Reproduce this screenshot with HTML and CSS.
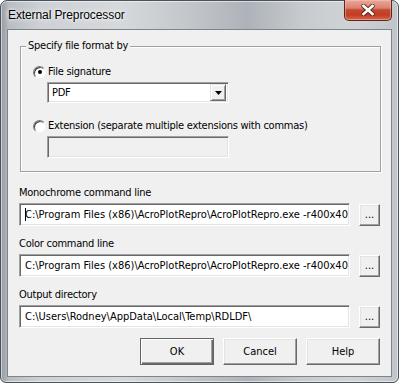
FILE: index.html
```html
<!DOCTYPE html>
<html>
<head>
	<title>External Preprocessor</title>
	<link rel="stylesheet" href="styles.css">
</head>
<body>
<div class="window">
	<div class="titlebar">
		<span class="title">External Preprocessor</span>
		<button class="close">
			<svg width="14" height="12" viewBox="0 0 14 12">
				<path d="M2.5 2 L11.5 10 M11.5 2 L2.5 10" stroke="#4a1c14" stroke-width="4.6" stroke-linecap="round" opacity="0.75"/>
				<path d="M2.5 2 L11.5 10 M11.5 2 L2.5 10" stroke="#fff" stroke-width="2.6" stroke-linecap="square"/>
			</svg>
		</button>
	</div>
	<div class="client">
		<fieldset class="group">
			<legend>Specify file format by</legend>
			<label class="radio first"><span class="dot checked"></span>File signature</label>
			<div class="combo">
				<span class="combo-text">PDF</span>
				<span class="drop">
					<svg width="7" height="4" viewBox="0 0 7 4"><path d="M0 0 H7 L3.5 4 Z" fill="#000"/></svg>
				</span>
			</div>
			<label class="radio second"><span class="dot"></span>Extension (separate multiple extensions with commas)</label>
			<div class="field disabled"></div>
		</fieldset>

		<div class="label first-label">Monochrome command line</div>
		<div class="row">
			<div class="field wide"><span class="caret"></span>C:\Program Files (x86)\AcroPlotRepro\AcroPlotRepro.exe -r400x40</div>
			<button class="btn browse">...</button>
		</div>

		<div class="label">Color command line</div>
		<div class="row">
			<div class="field wide">C:\Program Files (x86)\AcroPlotRepro\AcroPlotRepro.exe -r400x40</div>
			<button class="btn browse">...</button>
		</div>

		<div class="label">Output directory</div>
		<div class="row">
			<div class="field wide">C:\Users\Rodney\AppData\Local\Temp\RDLDF\</div>
			<button class="btn browse">...</button>
		</div>

		<div class="buttons">
			<button class="btn default">OK</button>
			<button class="btn">Cancel</button>
			<button class="btn">Help</button>
		</div>
	</div>
</div>
</body>
</html>
```

FILE: styles.css
```css
body {
	margin: 0;
	background: #fff;
}
.window {
	box-sizing: border-box;
	width: 399px;
	height: 383px;
	display: flex;
	flex-direction: column;
	padding: 0 6px 5px 6px;
	border: 1px solid #4b5259;
	border-radius: 7px 7px 6px 6px;
	box-shadow: inset 0 0 0 1px rgba(255, 255, 255, 0.55);
	background:
		linear-gradient(to right, rgba(120, 126, 132, 0.5) 0, rgba(120, 126, 132, 0) 2%),
		linear-gradient(to right, #b4b9bf 0%, #cdd1d5 10%, #d6d9dc 30%, #c2c6cb 48%, #aeb3b9 62%, #c7cbcf 76%, #d0d3d6 88%, #c0c5ca 100%);
}
.titlebar {
	height: 28px;
	display: flex;
	justify-content: space-between;
	align-items: flex-start;
}
.title {
	margin: 7px 0 0 1px;
	font-family: "Liberation Sans", sans-serif;
	font-size: 12px;
	line-height: 15px;
	letter-spacing: -0.1px;
	color: #000;
	text-shadow: 0 0 6px #fff, 0 0 3px #fff;
}
.close {
	width: 48px;
	height: 21px;
	margin-top: -1px;
	padding: 0;
	display: flex;
	align-items: center;
	justify-content: center;
	border: 1px solid #5e251b;
	border-top: none;
	border-radius: 0 0 5px 5px;
	background: linear-gradient(#e8aa9c 0%, #d98270 40%, #c6472f 50%, #c23e22 75%, #d6684d 100%);
	box-shadow: inset 0 0 0 1px rgba(255, 200, 190, 0.45);
}

.client {
	flex: 1;
	display: flex;
	flex-direction: column;
	padding: 9px 11px 0 11px;
	border: 1px solid #7d848b;
	background: #f0f0f0;
	font-family: "DejaVu Sans", sans-serif;
	font-stretch: condensed;
	font-size: 11px;
	line-height: 14px;
	letter-spacing: -0.25px;
	color: #000;
}

.group {
	margin: 0 0 0 1px;
	padding: 0 12px 13px 12px;
	width: 361px;
	box-sizing: border-box;
	border: 1px solid #a0a0a0;
	box-shadow: inset 1px 1px 0 #fff, 1px 1px 0 #fff;
	min-width: 0;
}
.group legend {
	margin-left: -7px;
	padding: 0 2px;
	background: #f0f0f0;
	line-height: 14px;
}
.radio {
	display: flex;
	align-items: center;
	height: 14px;
}
.radio.first {
	margin-top: 12px;
}
.radio.second {
	margin-top: 16px;
}
.dot {
	box-sizing: border-box;
	width: 13px;
	height: 13px;
	margin-right: 2px;
	border-radius: 50%;
	border: 1px solid;
	border-color: #7a7a7a #f4f4f4 #f4f4f4 #7a7a7a;
	background: #fff;
	box-shadow: inset 1px 1px 0 #404040;
	display: flex;
	align-items: center;
	justify-content: center;
}
.dot.checked::after {
	content: "";
	width: 4px;
	height: 4px;
	border-radius: 50%;
	background: #000;
}

.field, .combo {
	box-sizing: border-box;
	border: 1px solid;
	border-color: #a0a0a0 #fff #fff #a0a0a0;
	box-shadow: inset 1px 1px 0 #696969, inset -1px -1px 0 #e3e3e3;
	background: #fff;
}
.combo {
	margin: 3px 0 0 14px;
	width: 182px;
	height: 21px;
	display: flex;
	align-items: center;
	justify-content: space-between;
	padding: 2px 2px 2px 4px;
}
.drop {
	box-sizing: border-box;
	width: 16px;
	height: 17px;
	display: flex;
	align-items: center;
	justify-content: center;
	background: #f0f0f0;
	border: 1px solid;
	border-color: #e3e3e3 #696969 #696969 #e3e3e3;
	box-shadow: inset 1px 1px 0 #fff, inset -1px -1px 0 #a0a0a0;
}
.field.disabled {
	margin: 3px 0 0 14px;
	width: 182px;
	height: 22px;
	background: #f0f0f0;
}

.label {
	margin-top: 11px;
}
.label.first-label {
	margin-top: 14px;
}
.row {
	margin-top: 3px;
	display: flex;
	justify-content: space-between;
	align-items: flex-start;
}
.field.wide {
	width: 331px;
	height: 23px;
	padding: 0 2px 0 5px;
	display: flex;
	align-items: center;
	white-space: nowrap;
	overflow: hidden;
	letter-spacing: 0;
}
.caret {
	flex: none;
	width: 1px;
	height: 13px;
	margin-right: -1px;
	background: #000;
}

.btn {
	box-sizing: border-box;
	padding: 0;
	font: inherit;
	color: #000;
	background: #f0f0f0;
	border: 1px solid;
	border-color: #fff #696969 #696969 #fff;
	box-shadow: inset -1px -1px 0 #a0a0a0, inset 1px 1px 0 #e3e3e3;
}
.btn.browse {
	width: 21px;
	height: 22px;
	margin-top: 1px;
	display: flex;
	align-items: flex-end;
	justify-content: center;
	padding-bottom: 3px;
}
.buttons {
	margin-top: 10px;
	display: flex;
	justify-content: flex-end;
	gap: 9px;
}
.buttons .btn {
	width: 74px;
	height: 27px;
}
.btn.default {
	border-color: #646464;
	box-shadow: inset 1px 1px 0 #fff, inset -1px -1px 0 #696969, inset -2px -2px 0 #a0a0a0;
}
```
